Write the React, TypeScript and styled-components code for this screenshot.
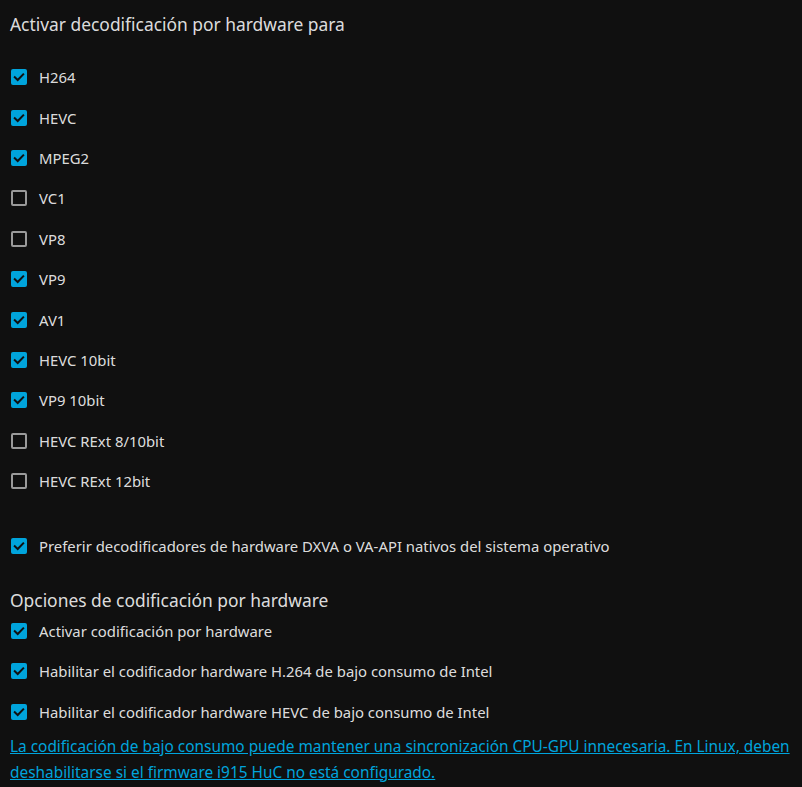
import React from "react";
import styled, { createGlobalStyle } from "styled-components";

const Global = createGlobalStyle`
  html, body { margin: 0; padding: 0; background: #101010; }
  body { font-family: "Noto Sans", sans-serif; color: rgba(255,255,255,0.87); }
`;

const Page = styled.div`
  padding: 0 10px;
  width: 802px;
  height: 787px;
  box-sizing: border-box;
  overflow: hidden;
`;

const Heading = styled.h2<{ $top: number; $bottom: number }>`
  margin: ${(p) => p.$top}px 0 ${(p) => p.$bottom}px;
  font-size: 17.4px;
  font-weight: 400;
  line-height: 24px;
  color: rgba(255,255,255,0.87);
`;

const List = styled.div<{ $top?: number }>`
  display: flex;
  flex-direction: column;
  margin-top: ${(p) => p.$top ?? 0}px;
`;

const Row = styled.label`
  display: flex;
  align-items: center;
  gap: 12px;
  height: 40.4px;
  padding-left: 1px;
  font-size: 14.87px;
  cursor: pointer;
`;

const Box = styled.span<{ $on: boolean }>`
  width: 16px;
  height: 16px;
  box-sizing: border-box;
  border-radius: 2px;
  flex: none;
  display: flex;
  align-items: center;
  justify-content: center;
  background: ${(p) => (p.$on ? "#00a4dc" : "transparent")};
  border: ${(p) => (p.$on ? "none" : "2px solid #9a9a9a")};
`;

const Note = styled.a`
  display: block;
  margin-top: 2px;
  font-size: 15.4px;
  line-height: 26px;
  color: #00a4dc;
  text-decoration: underline;
`;

const Check = ({ on }: { on: boolean }) => (
  <Box $on={on}>
    {on && (
      <svg width="12" height="12" viewBox="0 0 12 12">
        <path d="M1.8 6.2 L4.7 9 L10.2 3.3" fill="none" stroke="#101010" strokeWidth="2" strokeLinecap="square" strokeLinejoin="miter" />
      </svg>
    )}
  </Box>
);

const decoders: [string, boolean][] = [
  ["H264", true],
  ["HEVC", true],
  ["MPEG2", true],
  ["VC1", false],
  ["VP8", false],
  ["VP9", true],
  ["AV1", true],
  ["HEVC 10bit", true],
  ["VP9 10bit", true],
  ["HEVC RExt 8/10bit", false],
  ["HEVC RExt 12bit", false],
];

const encoders = [
  "Activar codificación por hardware",
  "Habilitar el codificador hardware H.264 de bajo consumo de Intel",
  "Habilitar el codificador hardware HEVC de bajo consumo de Intel",
];

export default function App() {
  return (
    <>
      <Global />
      <Page>
        <Heading $top={12} $bottom={21}>Activar decodificación por hardware para</Heading>
        <List>
          {decoders.map(([n, on]) => (
            <Row key={n}>
              <Check on={on} />
              {n}
            </Row>
          ))}
        </List>
        <List $top={25}>
          <Row>
            <Check on />
            Preferir decodificadores de hardware DXVA o VA-API nativos del sistema operativo
          </Row>
        </List>
        <Heading $top={21} $bottom={-1}>Opciones de codificación por hardware</Heading>
        <List>
          {encoders.map((t) => (
            <Row key={t}>
              <Check on />
              {t}
            </Row>
          ))}
        </List>
        <Note href="#">
          La codificación de bajo consumo puede mantener una sincronización CPU-GPU innecesaria. En Linux, deben deshabilitarse si el firmware i915 HuC no está configurado.
        </Note>
      </Page>
    </>
  );
}
